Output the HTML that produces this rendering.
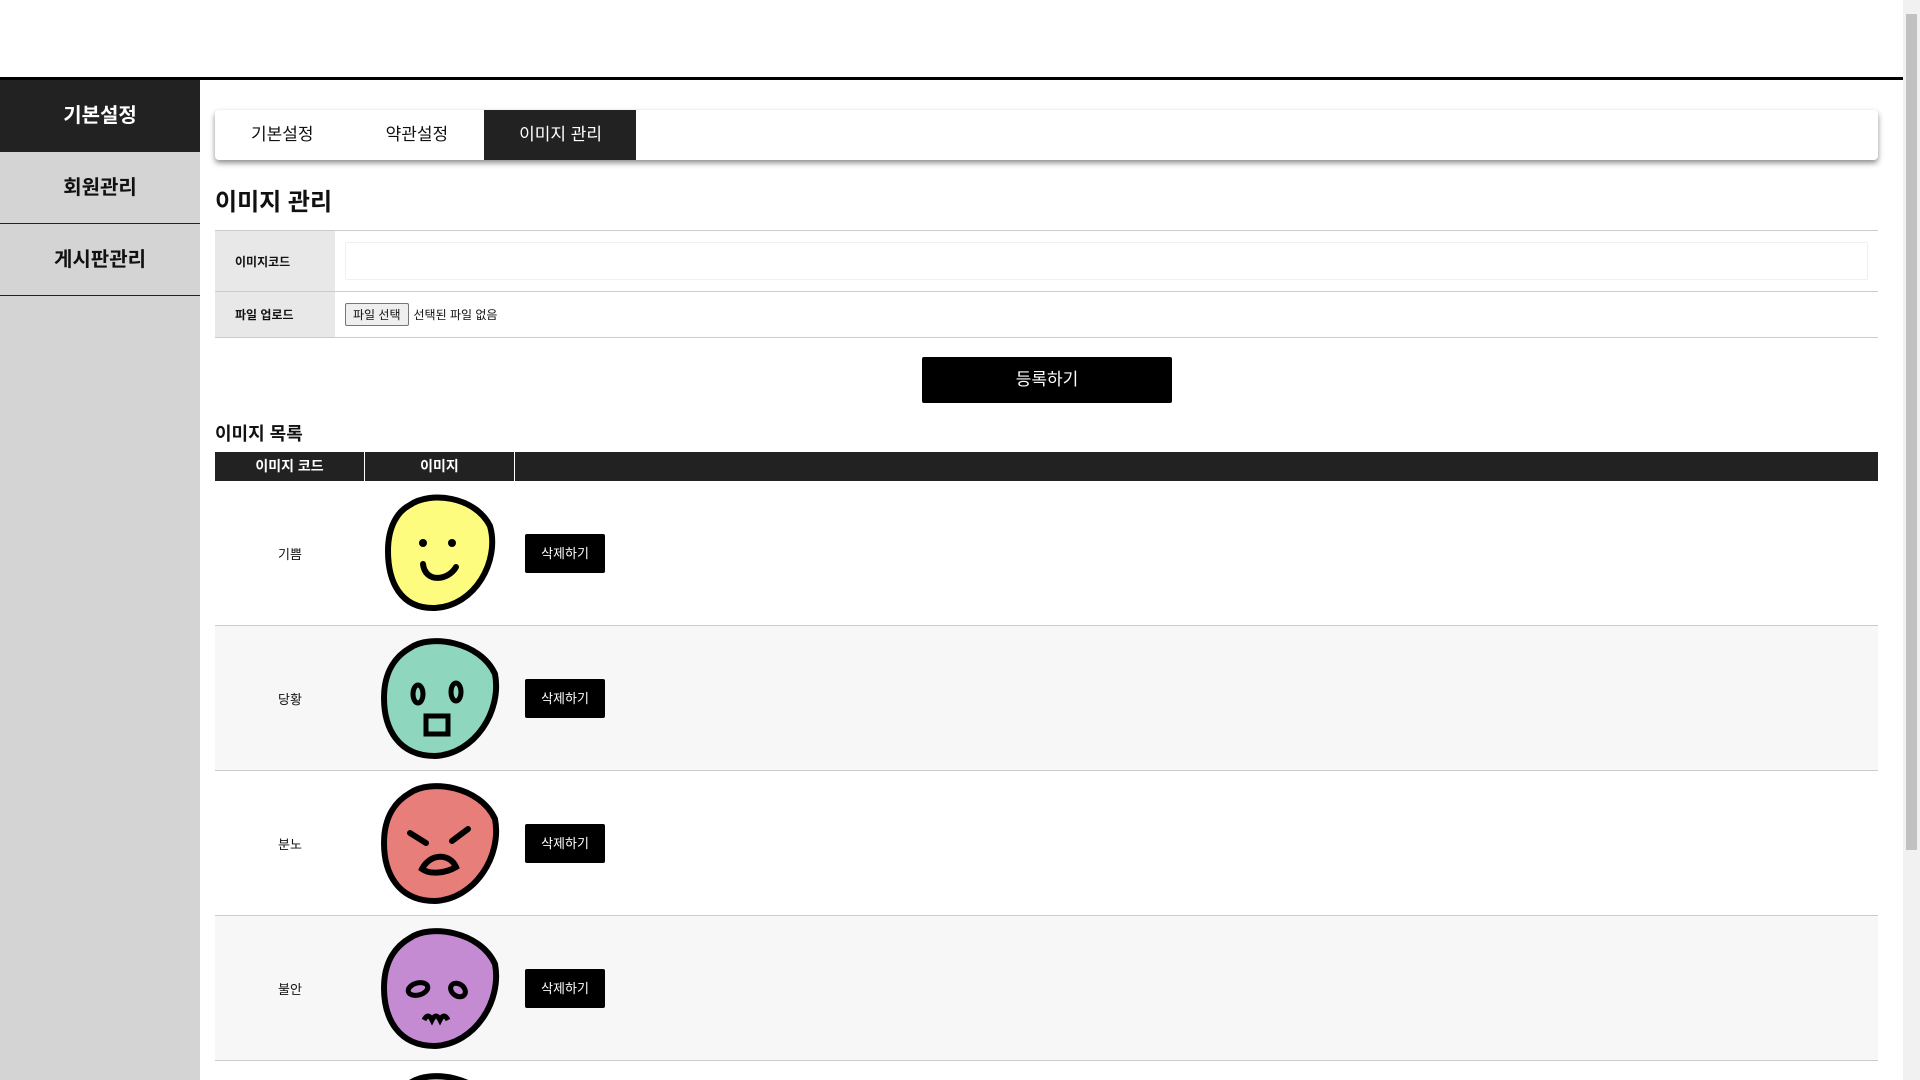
<!DOCTYPE html>
<html><head><meta charset="utf-8">
<style>
*{margin:0;padding:0;box-sizing:border-box}
html{width:1920px;height:1080px;overflow:hidden}
body{width:1920px;height:1080px;overflow:hidden;background:#fff;font-family:"Liberation Sans","Noto Sans CJK KR",sans-serif;color:#111;position:relative}
.topline{position:absolute;left:0;top:77px;width:1903px;height:3px;background:#000}
.scroll{position:absolute;right:0;top:0;width:17px;height:1080px;background:#f1f1f1}
.thumb{position:absolute;right:3px;top:14px;width:11px;height:836px;background:#c1c1c1}
.side{position:absolute;left:0;top:80px;width:200px;height:1000px;background:#d4d4d4}
.side div{height:72px;line-height:72px;text-align:center;font-size:20px;font-weight:bold;border-bottom:1px solid #222}
.side div.on{background:#222;color:#fff}
.tabs{position:absolute;left:215px;top:110px;width:1663px;height:50px;background:#fff;border-radius:4px;box-shadow:0 3px 6px rgba(0,0,0,.45);display:flex;overflow:hidden}
.tabs span{display:block;padding:0 36px;line-height:50px;font-size:17px}
.tabs span.on{background:#222;color:#fff;padding:0 34px 0 35px}
h2{position:absolute;left:215px;top:182px;font-size:24px;font-weight:bold}
.form{position:absolute;left:215px;top:230px;width:1663px;border-top:1px solid #ccc}
.row{display:flex;border-bottom:1px solid #ccc}
.lab{width:120px;background:#e8e8e8;font-size:12px;font-weight:bold;padding-left:20px;display:flex;align-items:center}
.val{flex:1;display:flex;align-items:center;padding-left:10px;font-size:12px}
.inp{width:1523px;height:38px;border:1px solid #f0f0f0;border-radius:2px}
.fbtn{border:1px solid #767676;background:#efefef;border-radius:2px;padding:2px 7px;margin-right:5px;font-size:12px}
.sub{position:absolute;left:922px;top:357px;width:250px;height:46px;background:#000;color:#fff;font-size:17px;text-align:center;line-height:46px;border-radius:2px}
h3{position:absolute;left:215px;top:420px;font-size:18px;font-weight:bold}
.tbl{position:absolute;left:215px;top:452px;width:1663px;height:628px;overflow:hidden}
.th{display:flex;height:29px;background:#222;color:#fff;font-size:14px;font-weight:bold;line-height:29px}
.th div{text-align:center}
.c1{width:150px;border-right:1px solid #fff}
.c2{width:150px;border-right:1px solid #fff}
.tr{display:flex;height:145px;border-bottom:1px solid #ccc;align-items:center;background:#fff}
.tr:nth-child(even){background:#f7f7f7}
.tr .c1,.tr .c2{border:none;text-align:center;font-size:13px}
.tr .c2{display:flex;justify-content:center}
.del{width:80px;height:39px;background:#000;color:#fff;font-size:13px;line-height:39px;text-align:center;border-radius:2px;margin-left:10px}
</style></head><body>
<div class="topline"></div>
<div class="scroll"><div class="thumb"></div></div>
<div class="side"><div class="on">기본설정</div><div>회원관리</div><div>게시판관리</div></div>
<div class="tabs"><span>기본설정</span><span>약관설정</span><span class="on">이미지 관리</span></div>
<h2>이미지 관리</h2>
<div class="form">
<div class="row" style="height:61px"><div class="lab">이미지코드</div><div class="val"><div class="inp"></div></div></div>
<div class="row" style="height:46px"><div class="lab">파일 업로드</div><div class="val"><span class="fbtn">파일 선택</span>선택된 파일 없음</div></div>
</div>
<div class="sub">등록하기</div>
<h3>이미지 목록</h3>
<div class="tbl">
<div class="th"><div class="c1">이미지 코드</div><div class="c2">이미지</div><div></div></div>
<div>
<div class="tr"><div class="c1">기쁨</div><div class="c2"><svg width="120" height="125" viewBox="0 0 120 125"><path d="M30 14 C50 0 95 5 110 35 C120 70 95 115 55 117 C20 118 8 90 8 60 C8 35 18 20 30 14Z" fill="#fdfc7f" stroke="#000" stroke-width="6"/><circle cx="43" cy="52" r="4"/><circle cx="72" cy="52" r="4"/><path d="M43 73 C45 92 68 90 76 76" fill="none" stroke="#000" stroke-width="6" stroke-linecap="round"/></svg></div><div class="del">삭제하기</div></div>
<div class="tr"><div class="c1">당황</div><div class="c2"><svg width="120" height="125" viewBox="0 0 120 125"><path d="M30 12 C50 -2 100 5 115 38 C122 75 95 118 55 120 C18 120 4 92 4 62 C4 35 16 20 30 12Z" fill="#8fd6be" stroke="#000" stroke-width="6"/><ellipse cx="38" cy="58" rx="5" ry="9" fill="none" stroke="#000" stroke-width="5"/><ellipse cx="76" cy="56" rx="5" ry="9" fill="none" stroke="#000" stroke-width="5"/><rect x="46" y="80" width="22" height="18" fill="none" stroke="#000" stroke-width="5"/></svg></div><div class="del">삭제하기</div></div>
<div class="tr"><div class="c1">분노</div><div class="c2"><svg width="120" height="125" viewBox="0 0 120 125"><path d="M30 12 C50 -2 100 5 115 38 C122 75 95 118 55 120 C18 120 4 92 4 62 C4 35 16 20 30 12Z" fill="#e77e7a" stroke="#000" stroke-width="6"/><path d="M30 52 L46 62 M88 48 L72 60" stroke="#000" stroke-width="6" stroke-linecap="round"/><path d="M42 88 C50 72 70 72 76 86 C66 92 50 94 42 88Z" fill="none" stroke="#000" stroke-width="6"/></svg></div><div class="del">삭제하기</div></div>
<div class="tr"><div class="c1">불안</div><div class="c2"><svg width="120" height="125" viewBox="0 0 120 125"><path d="M30 12 C50 -2 100 5 115 38 C122 75 95 118 55 120 C18 120 4 92 4 62 C4 35 16 20 30 12Z" fill="#c48ad2" stroke="#000" stroke-width="6"/><ellipse cx="38" cy="63" rx="10" ry="6" transform="rotate(-15 38 63)" fill="none" stroke="#000" stroke-width="5"/><ellipse cx="78" cy="64" rx="8" ry="6" transform="rotate(35 78 64)" fill="none" stroke="#000" stroke-width="5"/><path d="M44 94 q4 -8 8 0 q4 -8 8 0 q4 -8 8 0" fill="none" stroke="#000" stroke-width="5"/></svg></div><div class="del">삭제하기</div></div>
<div class="tr"><div class="c1"></div><div class="c2"><svg width="120" height="125" viewBox="0 0 120 125"><path d="M30 12 C50 -2 100 5 115 38 C122 75 95 118 55 120 C18 120 4 92 4 62 C4 35 16 20 30 12Z" fill="#bbb" stroke="#000" stroke-width="6"/></svg></div></div>
</div>
</div>
</body></html>
